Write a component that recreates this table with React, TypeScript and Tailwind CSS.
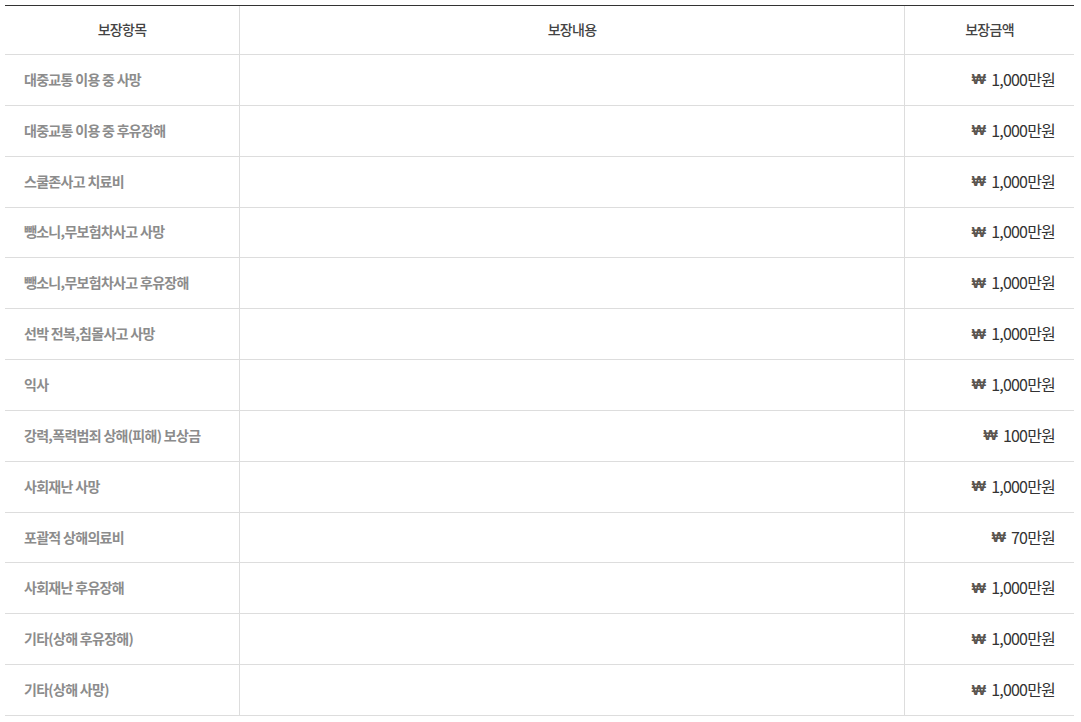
const ROWS = [
  { name: "대중교통 이용 중 사망", amount: "1,000만원" },
  { name: "대중교통 이용 중 후유장해", amount: "1,000만원" },
  { name: "스쿨존사고 치료비", amount: "1,000만원" },
  { name: "뺑소니,무보험차사고 사망", amount: "1,000만원" },
  { name: "뺑소니,무보험차사고 후유장해", amount: "1,000만원" },
  { name: "선박 전복,침몰사고 사망", amount: "1,000만원" },
  { name: "익사", amount: "1,000만원" },
  { name: "강력,폭력범죄 상해(피해) 보상금", amount: "100만원" },
  { name: "사회재난 사망", amount: "1,000만원" },
  { name: "포괄적 상해의료비", amount: "70만원" },
  { name: "사회재난 후유장해", amount: "1,000만원" },
  { name: "기타(상해 후유장해)", amount: "1,000만원" },
  { name: "기타(상해 사망)", amount: "1,000만원" },
];

const font = "font-['Noto_Sans_CJK_KR','Noto_Sans',sans-serif]";

export default function App() {
  return (
    <div className={`min-h-screen bg-white pl-[5px] pt-[5px] ${font}`}>
      <div className="w-[1069px] border-t border-[#333]">
        {/* header */}
        <div className="grid h-[49px] grid-cols-[235px_665px_169px] border-b border-[#ddd] text-[14px] font-medium leading-none tracking-[-0.05em] text-[#444]">
          <div className="flex items-center justify-center border-r border-[#ddd] pb-[2px]">보장항목</div>
          <div className="flex items-center justify-center border-r border-[#ddd] pb-[2px]">보장내용</div>
          <div className="flex items-center justify-center pb-[2px]">보장금액</div>
        </div>

        {ROWS.map((r) => (
          <div
            key={r.name}
            className="grid h-[50.85px] grid-cols-[235px_665px_169px] border-b border-[#ddd]"
          >
            <div className="flex items-center border-r border-[#ddd] pb-[2px] pl-[19px] text-[14px] font-semibold leading-none tracking-[-0.05em] text-[#8c8c8c]">
              {r.name}
            </div>
            <div className="border-r border-[#ddd]" />
            <div className="flex items-center justify-end pb-[2px] pr-[19px] text-[16px] leading-none tracking-[-0.05em] text-[#333]">
              <span className="mr-[6px] font-['Liberation_Sans',sans-serif] text-[15px] font-bold text-[#5a5550]">₩</span>
              {r.amount}
            </div>
          </div>
        ))}
      </div>
    </div>
  );
}
